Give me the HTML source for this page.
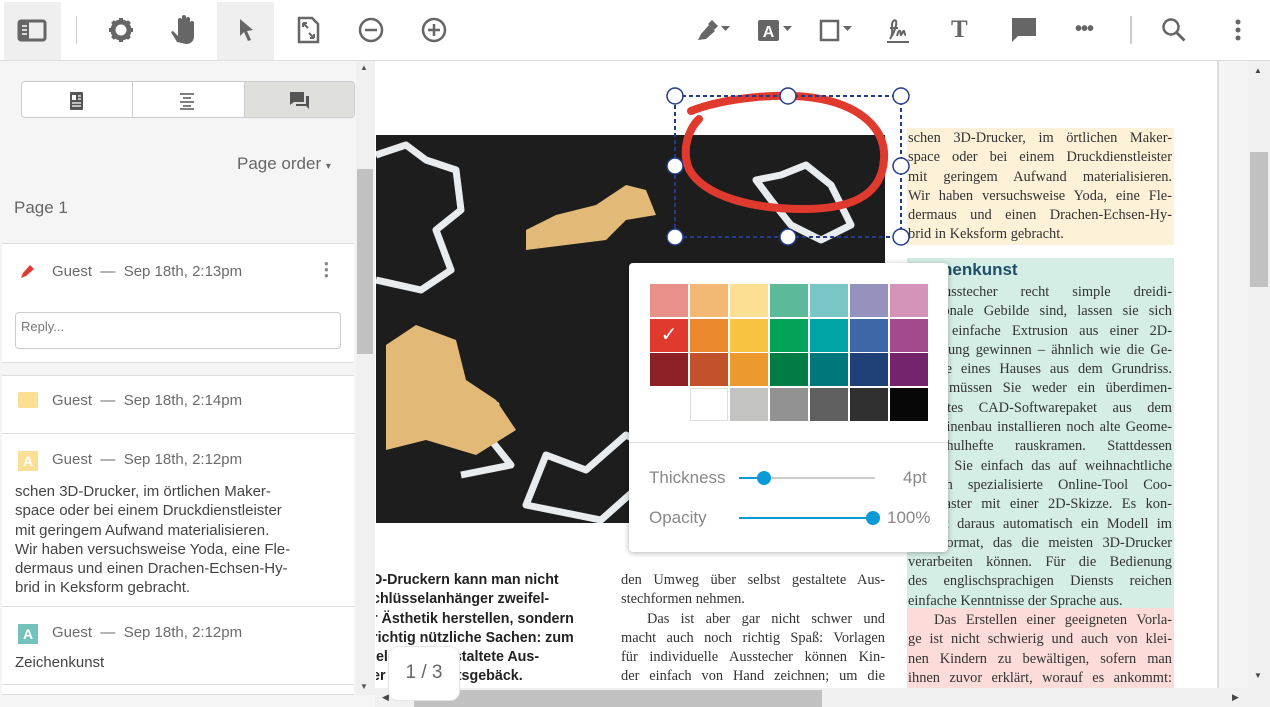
<!DOCTYPE html>
<html><head><meta charset="utf-8"><style>
*{box-sizing:border-box;margin:0;padding:0}
body{width:1270px;height:707px;overflow:hidden;position:relative;font-family:"Liberation Sans",sans-serif;background:#fff;color:#555}
.a{position:absolute}
.tb{left:0;top:0;width:1270px;height:61px;border-bottom:1px solid #ddd;background:#fff}
.ic{position:absolute;top:14px;width:32px;height:32px}
.side{left:0;top:61px;width:375px;height:646px;background:#f5f5f5}
.card{position:absolute;left:2px;width:352px;background:#fff;border-top:1px solid #ddd;border-bottom:1px solid #ddd}
.meta{position:absolute;font-size:15px;color:#6b6b6b}
.ser{font-family:"Liberation Serif",serif;font-size:14.4px;line-height:19.3px;color:#333;position:absolute;white-space:nowrap}
.ser div{height:19.3px;text-align:justify;text-align-last:justify;white-space:normal}
.ser div.l{text-align-last:left}
.bold{font-family:"Liberation Sans",sans-serif;font-weight:bold;font-size:14.3px;line-height:19.3px;color:#222;position:absolute;white-space:nowrap}
.sw{position:absolute;width:38px;height:33px}
</style></head><body>
<div class="a tb">
 <div class="a" style="left:4px;top:2px;width:57px;height:58px;background:#efefef"></div>
 <div class="a" style="left:217px;top:2px;width:57px;height:58px;background:#efefef"></div>
 <svg class="ic" style="left:16px" viewBox="0 0 32 32"><rect x="3" y="7" width="26" height="19" rx="2" fill="none" stroke="#666" stroke-width="3"/><rect x="4" y="8" width="9" height="17" fill="#666"/><path d="M6 12h5M6 16h5M6 20h5" stroke="#fff" stroke-width="1.5"/></svg>
 <div class="a" style="left:76px;top:16px;width:1px;height:28px;background:#ccc"></div>
 <svg class="ic" style="left:105px" viewBox="0 0 32 32"><circle cx="16" cy="16" r="8" fill="none" stroke="#666" stroke-width="5"/><path d="M16 4v6M16 22v6M4 16h6M22 16h6M7.5 7.5l4 4M20.5 20.5l4 4M7.5 24.5l4-4M20.5 11.5l4-4" stroke="#666" stroke-width="4"/></svg>
 <svg class="ic" style="left:168px" viewBox="0 0 32 32"><path d="M9 28l-6-10 2-1 5 5V6a2 2 0 014 0v8-11a2 2 0 014 0v11-9a2 2 0 014 0v10-6a2 2 0 014 0v13c0 5-3 8-8 8z" fill="#666"/></svg>
 <svg class="ic" style="left:229px" viewBox="0 0 32 32"><path d="M11 5l13 11-6 1 4 9-3 1-4-9-4 4z" fill="#666"/></svg>
 <svg class="ic" style="left:292px" viewBox="0 0 32 32"><path d="M7 4h13l6 6v18H7z" fill="none" stroke="#666" stroke-width="2.5"/><path d="M11 9l5 5M11 9v4M11 9h4M22 24l-5-5M22 24v-4M22 24h-4" stroke="#666" stroke-width="2"/></svg>
 <svg class="ic" style="left:355px" viewBox="0 0 32 32"><circle cx="16" cy="16" r="11" fill="none" stroke="#666" stroke-width="2.5"/><path d="M10 16h12" stroke="#666" stroke-width="2.5"/></svg>
 <svg class="ic" style="left:418px" viewBox="0 0 32 32"><circle cx="16" cy="16" r="11" fill="none" stroke="#666" stroke-width="2.5"/><path d="M10 16h12M16 10v12" stroke="#666" stroke-width="2.5"/></svg>
 <svg class="ic" style="left:694px;width:40px" viewBox="0 0 40 32"><path d="M4 26l3-6 8-9 6 6-9 8z" fill="#666"/><path d="M14 10l4-4 6 6-4 4z" fill="#666"/><path d="M27 12h9l-4.5 5z" fill="#666"/></svg>
 <svg class="ic" style="left:756px;width:40px" viewBox="0 0 40 32"><rect x="2" y="6" width="21" height="21" rx="2" fill="#666"/><text x="12.5" y="23" font-family="Liberation Sans" font-weight="bold" font-size="16" fill="#fff" text-anchor="middle">A</text><path d="M27 12h9l-4.5 5z" fill="#666"/></svg>
 <svg class="ic" style="left:818px;width:40px" viewBox="0 0 40 32"><rect x="3" y="7" width="17" height="19" fill="none" stroke="#666" stroke-width="2.5"/><path d="M25 12h9l-4.5 5z" fill="#666"/></svg>
 <svg class="ic" style="left:882px" viewBox="0 0 32 32"><path d="M5 28h22M10 22c3-6 5-12 4-15-1-2-4 0-4 4 0 5 1 10-2 14M8 14h8M15 22c1-4 2-6 3-5s0 4 1 4 2-5 3-4 0 4 2 4" fill="none" stroke="#666" stroke-width="2"/></svg>
 <div class="a" style="left:951px;top:16px;font-family:'Liberation Serif',serif;font-weight:bold;font-size:25px;color:#666">T</div>
 <svg class="ic" style="left:1008px" viewBox="0 0 32 32"><path d="M4 4h24v18H10l-6 6z" fill="#666"/></svg>
 <div class="a" style="left:1075px;top:18px;font-size:20px;color:#666;letter-spacing:-1px;font-weight:bold">•••</div>
 <div class="a" style="left:1130px;top:16px;width:2px;height:28px;background:#ccc"></div>
 <svg class="ic" style="left:1158px" viewBox="0 0 32 32"><circle cx="13" cy="13" r="7.5" fill="none" stroke="#666" stroke-width="2.5"/><path d="M18.5 18.5l8 8" stroke="#666" stroke-width="3"/></svg>
 <svg class="ic" style="left:1222px" viewBox="0 0 32 32"><circle cx="16" cy="8" r="2.5" fill="#666"/><circle cx="16" cy="16" r="2.5" fill="#666"/><circle cx="16" cy="24" r="2.5" fill="#666"/></svg>
</div>

<div class="a side">
 <div class="a" style="left:21px;top:20px;width:334px;height:37px;border:1px solid #ccc;border-radius:4px;background:#fff;overflow:hidden">
  <div class="a" style="left:110px;top:0;width:1px;height:37px;background:#ccc"></div>
  <div class="a" style="left:222px;top:0;width:112px;height:37px;background:#dfdfdc;border-left:1px solid #ccc"></div>
  <svg class="a" style="left:46px;top:9px" width="18" height="20" viewBox="0 0 18 20"><rect x="2" y="1" width="13" height="18" rx="1" fill="#555"/><rect x="4" y="4" width="4" height="5" fill="#fff"/><path d="M10 5h3M10 8h3M4 12h9M4 15h9" stroke="#fff" stroke-width="1.3"/></svg>
  <svg class="a" style="left:155px;top:9px" width="20" height="20" viewBox="0 0 20 20"><path d="M3 3h14M6 7h8M3 11h14M6 15h8M3 18h14" stroke="#555" stroke-width="1.5"/></svg>
  <svg class="a" style="left:267px;top:9px" width="22" height="20" viewBox="0 0 22 20"><path d="M1 1h14v10H5l-4 3z" fill="#555"/><path d="M17 5h3v13l-3-3H7v-2h10z" fill="#555"/></svg>
 </div>
 <div class="a" style="left:237px;top:93px;font-size:17px;color:#666">Page order <span style="font-size:10px">▾</span></div>
 <div class="a" style="left:14px;top:137px;font-size:17px;color:#666">Page 1</div>
 <div class="card" style="top:182px;height:120px">
  <svg class="a" style="left:17px;top:18px" width="18" height="18" viewBox="0 0 18 18"><path d="M2 16l2-5 7-8 4 4-8 7z" fill="#e03a2e"/></svg>
  <div class="meta" style="left:50px;top:19px">Guest &nbsp;— &nbsp;Sep 18th, 2:13pm</div>
  <div class="a" style="left:322px;top:17px;width:4px;font-size:8px;line-height:6px;color:#888">●<br>●<br>●</div>
  <div class="a" style="left:13px;top:68px;width:326px;height:37px;border:1px solid #ccc;border-radius:4px;font-size:13px;color:#777;padding:6px 5px">Reply...</div>
 </div>
 <div class="card" style="top:314px;height:320px">
  <div class="a" style="left:16px;top:16px;width:20px;height:16px;background:#fbdf94;border-radius:2px"></div>
  <div class="meta" style="left:50px;top:16px">Guest &nbsp;— &nbsp;Sep 18th, 2:14pm</div>
  <div class="a" style="left:0;top:57px;width:352px;height:1px;background:#ddd"></div>
  <div class="a" style="left:16px;top:75px;width:20px;height:20px;background:#fbdf94;color:#fff;font-weight:bold;font-size:14px;text-align:center;line-height:20px">A</div>
  <div class="meta" style="left:50px;top:75px">Guest &nbsp;— &nbsp;Sep 18th, 2:12pm</div>
  <div class="a" style="left:13px;top:106px;font-size:15px;line-height:19.3px;color:#444">schen 3D-Drucker, im örtlichen Maker-<br>space oder bei einem Druckdienstleister<br>mit geringem Aufwand materialisieren.<br>Wir haben versuchsweise Yoda, eine Fle-<br>dermaus und einen Drachen-Echsen-Hy-<br>brid in Keksform gebracht.</div>
  <div class="a" style="left:0;top:230px;width:352px;height:1px;background:#ddd"></div>
  <div class="a" style="left:16px;top:248px;width:20px;height:20px;background:#74c2bc;color:#fff;font-weight:bold;font-size:14px;text-align:center;line-height:20px">A</div>
  <div class="meta" style="left:50px;top:248px">Guest &nbsp;— &nbsp;Sep 18th, 2:12pm</div>
  <div class="a" style="left:13px;top:278px;font-size:15px;color:#444">Zeichenkunst</div>
  <div class="a" style="left:0;top:308px;width:352px;height:1px;background:#ddd"></div>
 </div>
 <div class="a" style="left:356px;top:0;width:19px;height:634px;background:#f0f0f0"></div>
 <div class="a" style="left:357px;top:108px;width:16px;height:185px;background:#c1c1c1"></div>
 <div class="a" style="left:360px;top:2px;font-size:8px;color:#555">▲</div>
 <div class="a" style="left:360px;top:621px;font-size:8px;color:#555">▼</div>
</div>

<!-- document -->
<div class="a" style="left:376px;top:61px;width:842px;height:627px;background:#fff;overflow:hidden">
 <div class="a" style="left:0;top:74px;width:509px;height:388px;background:#1d1d1d"></div>
 <svg class="a" style="left:0;top:74px" width="509" height="388" viewBox="0 0 509 388">
  <g fill="none" stroke="#e8ecee" stroke-width="7" stroke-linejoin="round">
   <path d="M0 20l30-10 20 15 30 10 5 40-25 20 15 40-30 20-45-10"/>
   <path d="M380 45l25-5 25-10 25 20 20 40-30 15-30-15-20-25z"/>
   <path d="M150 370l20-50 40 15 40-35 30 15 25-25 35 15-15 25-55 15-45 40z"/>
   <path d="M60 280l20-30 40 20-5 35 20 25-50 10"/>
  </g>
  <g fill="#e3b978">
   <path d="M150 95l30-15 40-10 30-20 20 5 10 25-30 5-20 20-40 5-40 5z"/>
   <path d="M10 210l30-20 40 15 10 40 30 20 20 30-40 25-50-15-40 10z"/>
   <path d="M20 235c5-25 30-35 50-15"/>
  </g>
 </svg>
 <!-- right column highlights -->
 <div class="a" style="left:531px;top:67px;width:267px;height:117px;background:#fdf1d8"></div>
 <div class="a" style="left:531px;top:197px;width:267px;height:350px;background:#d4ede5"></div>
 <div class="a" style="left:531px;top:547px;width:267px;height:80px;background:#fcdcd8"></div>
 <div class="ser" style="left:532px;top:68px;width:264px"><div>schen 3D-Drucker, im örtlichen Maker-</div><div>space oder bei einem Druckdienstleister</div><div>mit geringem Aufwand materialisieren.</div><div>Wir haben versuchsweise Yoda, eine Fle-</div><div>dermaus und einen Drachen-Echsen-Hy-</div><div class="l">brid in Keksform gebracht.</div></div>
 <div class="a" style="left:532px;top:199px;font-family:'Liberation Sans',sans-serif;font-weight:bold;font-size:17px;color:#1d4f6a">Zeichenkunst</div>
 <div class="ser" style="left:532px;top:222px;width:264px"><div>Keksausstecher recht simple dreidi-</div><div>mensionale Gebilde sind, lassen sie sich</div><div>durch einfache Extrusion aus einer 2D-</div><div>Zeichnung gewinnen – ähnlich wie die Ge-</div><div>schosse eines Hauses aus dem Grundriss.</div><div>Dazu müssen Sie weder ein überdimen-</div><div>sioniertes CAD-Softwarepaket aus dem</div><div>Maschinenbau installieren noch alte Geome-</div><div>trie-Schulhefte rauskramen. Stattdessen</div><div>füttern Sie einfach das auf weihnachtliche</div><div>Formen spezialisierte Online-Tool Coo-</div><div>kie Caster mit einer 2D-Skizze. Es kon-</div><div>struiert daraus automatisch ein Modell im</div><div>STL-Format, das die meisten 3D-Drucker</div><div>verarbeiten können. Für die Bedienung</div><div>des englischsprachigen Diensts reichen</div><div class="l">einfache Kenntnisse der Sprache aus.</div></div>
 <div class="ser" style="left:532px;top:550px;width:264px"><div style="padding-left:26px">Das Erstellen einer geeigneten Vorla-</div><div>ge ist nicht schwierig und auch von klei-</div><div>nen Kindern zu bewältigen, sofern man</div><div>ihnen zuvor erklärt, worauf es ankommt:</div></div>
 <div class="ser" style="left:245px;top:510px;width:264px"><div>den Umweg über selbst gestaltete Aus-</div><div class="l">stechformen nehmen.</div><div style="padding-left:26px">Das ist aber gar nicht schwer und</div><div>macht auch noch richtig Spaß: Vorlagen</div><div>für individuelle Ausstecher können Kin-</div><div>der einfach von Hand zeichnen; um die</div></div>
 <div class="bold" style="left:-4px;top:510px">D-Druckern kann man nicht<br>chlüsselanhänger zweifel-<br>r Ästhetik herstellen, sondern<br>richtig nützliche Sachen: zum<br>iel selbst gestaltete Aus-<br>er Weihnachtsgebäck.</div>
 <!-- ink annotation + selection -->
 <svg class="a" style="left:290px;top:25px" width="250" height="190" viewBox="0 0 250 190">
  <path d="M25 25c30-12 90-20 130-12 40 8 65 30 63 60-2 35-30 50-80 50-50 0-100-12-115-40-8-20 0-40 10-50" fill="none" stroke="#e03a2e" stroke-width="8" stroke-linecap="round"/>
  <rect x="9" y="10" width="226" height="141" fill="none" stroke="#223c8c" stroke-width="2" stroke-dasharray="4 3"/>
  <g fill="#fff" stroke="#223c8c" stroke-width="1.5">
   <circle cx="9" cy="10" r="8"/><circle cx="122" cy="10" r="8"/><circle cx="235" cy="10" r="8"/>
   <circle cx="9" cy="80" r="8"/><circle cx="235" cy="80" r="8"/>
   <circle cx="9" cy="151" r="8"/><circle cx="122" cy="151" r="8"/><circle cx="235" cy="151" r="8"/>
  </g>
 </svg>
</div>
<!-- right margin + scrollbar -->
<div class="a" style="left:1217px;top:61px;width:2px;height:627px;background:#ddd"></div>
<div class="a" style="left:1219px;top:61px;width:29px;height:627px;background:#f4f4f4"></div>
<div class="a" style="left:1248px;top:61px;width:22px;height:627px;background:#f0f0f0"></div>
<div class="a" style="left:1250px;top:152px;width:18px;height:135px;background:#c1c1c1"></div>
<div class="a" style="left:1254px;top:66px;font-size:8px;color:#444">▲</div>
<div class="a" style="left:1254px;top:671px;font-size:8px;color:#444">▼</div>
<!-- bottom scrollbar -->
<div class="a" style="left:375px;top:688px;width:895px;height:19px;background:#f0f0f0"></div>
<div class="a" style="left:414px;top:690px;width:408px;height:17px;background:#c1c1c1"></div>
<div class="a" style="left:382px;top:692px;font-size:9px;color:#444">◀</div>
<div class="a" style="left:1232px;top:692px;font-size:9px;color:#444">▶</div>
<!-- page indicator -->
<div class="a" style="left:388px;top:646px;width:72px;height:55px;background:#fff;border:1px solid #e6e6e6;border-radius:10px;font-size:19px;color:#666;text-align:center;line-height:52px">1 / 3</div>

<!-- color popup -->
<div class="a" style="left:629px;top:263px;width:319px;height:289px;background:#fff;border-radius:4px;box-shadow:0 1px 6px rgba(0,0,0,.3)">
 <div class="a" style="left:0;top:179px;width:319px;height:1px;background:#ddd"></div>
 <div class="a" style="left:20px;top:205px;font-size:17px;color:#888">Thickness</div>
 <div class="a" style="left:110px;top:214px;width:136px;height:2px;background:#ccc"></div>
 <div class="a" style="left:110px;top:214px;width:26px;height:2px;background:#0a9bd6"></div>
 <div class="a" style="left:128px;top:208px;width:14px;height:14px;border-radius:50%;background:#0a9bd6"></div>
 <div class="a" style="left:274px;top:205px;font-size:17px;color:#888">4pt</div>
 <div class="a" style="left:20px;top:245px;font-size:17px;color:#888">Opacity</div>
 <div class="a" style="left:110px;top:254px;width:136px;height:2px;background:#0a9bd6"></div>
 <div class="a" style="left:237px;top:248px;width:14px;height:14px;border-radius:50%;background:#0a9bd6"></div>
 <div class="a" style="left:258px;top:245px;font-size:17px;color:#888">100%</div>
</div>
<div class="a" style="left:650px;top:284px;width:279px;height:139px">
 <div class="sw" style="left:0;top:0;background:#e9908a"></div><div class="sw" style="left:40px;top:0;background:#f3b873"></div><div class="sw" style="left:80px;top:0;background:#fddf93"></div><div class="sw" style="left:120px;top:0;background:#5cb99a"></div><div class="sw" style="left:160px;top:0;background:#78c6c5"></div><div class="sw" style="left:200px;top:0;background:#9592be"></div><div class="sw" style="left:240px;top:0;background:#d494b9"></div>
 <div class="sw" style="left:0;top:35px;background:#e03a2e;color:#fff;text-align:center;font-size:20px;line-height:33px">✓</div><div class="sw" style="left:40px;top:35px;background:#ec882e"></div><div class="sw" style="left:80px;top:35px;background:#f8c341"></div><div class="sw" style="left:120px;top:35px;background:#00a358"></div><div class="sw" style="left:160px;top:35px;background:#00a4a3"></div><div class="sw" style="left:200px;top:35px;background:#3e67a8"></div><div class="sw" style="left:240px;top:35px;background:#a24a8e"></div>
 <div class="sw" style="left:0;top:69px;background:#8b2027"></div><div class="sw" style="left:40px;top:69px;background:#c1522b"></div><div class="sw" style="left:80px;top:69px;background:#ec9a2d"></div><div class="sw" style="left:120px;top:69px;background:#017c45"></div><div class="sw" style="left:160px;top:69px;background:#00777a"></div><div class="sw" style="left:200px;top:69px;background:#1f3f77"></div><div class="sw" style="left:240px;top:69px;background:#76236e"></div>
 <div class="sw" style="left:40px;top:104px;background:#fff;border:1px solid #ddd"></div><div class="sw" style="left:80px;top:104px;background:#c3c3c2"></div><div class="sw" style="left:120px;top:104px;background:#929292"></div><div class="sw" style="left:160px;top:104px;background:#5f5f5f"></div><div class="sw" style="left:200px;top:104px;background:#303030"></div><div class="sw" style="left:240px;top:104px;background:#070707"></div>
</div>
</body></html>
